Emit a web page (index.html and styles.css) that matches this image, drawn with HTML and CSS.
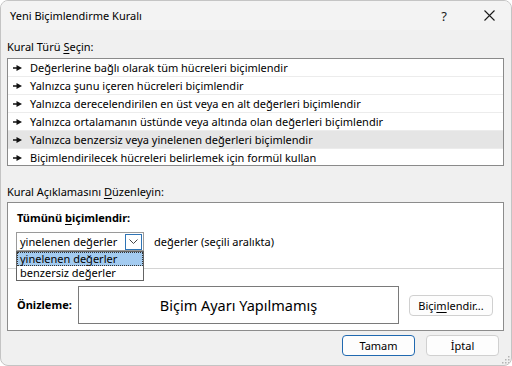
FILE: index.html
```html
<!DOCTYPE html>
<html lang="tr">

<head>
  <meta charset="UTF-8">
  <title>Yeni Biçimlendirme Kuralı</title>
  <link rel="stylesheet" href="styles.css">
</head>

<body>
  <div class="dialog">
    <div class="titlebar">
      <span class="title">Yeni Biçimlendirme Kuralı</span>
      <span class="help">?</span>
      <svg class="close" width="11" height="11" viewBox="0 0 11 11">
        <path d="M0.5 0.5 L10.5 10.5 M10.5 0.5 L0.5 10.5" stroke="#1a1a1a" stroke-width="1.1" fill="none" />
      </svg>
    </div>

    <div class="content">
      <div class="label label-first">Kural Türü <u>S</u>eçin:</div>
      <ul class="rule-list">
        <li><svg class="arrow" width="9" height="6" viewBox="0 0 9 6"><path d="M0 3h5" stroke="#111" stroke-width="1.3" /><path d="M3.5 0l5.5 3-5.5 3z" fill="#111" /></svg>Değerlerine bağlı olarak tüm hücreleri biçimlendir</li>
        <li><svg class="arrow" width="9" height="6" viewBox="0 0 9 6"><path d="M0 3h5" stroke="#111" stroke-width="1.3" /><path d="M3.5 0l5.5 3-5.5 3z" fill="#111" /></svg>Yalnızca şunu içeren hücreleri biçimlendir</li>
        <li><svg class="arrow" width="9" height="6" viewBox="0 0 9 6"><path d="M0 3h5" stroke="#111" stroke-width="1.3" /><path d="M3.5 0l5.5 3-5.5 3z" fill="#111" /></svg>Yalnızca derecelendirilen en üst veya en alt değerleri biçimlendir</li>
        <li><svg class="arrow" width="9" height="6" viewBox="0 0 9 6"><path d="M0 3h5" stroke="#111" stroke-width="1.3" /><path d="M3.5 0l5.5 3-5.5 3z" fill="#111" /></svg>Yalnızca ortalamanın üstünde veya altında olan değerleri biçimlendir</li>
        <li class="selected"><svg class="arrow" width="9" height="6" viewBox="0 0 9 6"><path d="M0 3h5" stroke="#111" stroke-width="1.3" /><path d="M3.5 0l5.5 3-5.5 3z" fill="#111" /></svg>Yalnızca benzersiz veya yinelenen değerleri biçimlendir</li>
        <li><svg class="arrow" width="9" height="6" viewBox="0 0 9 6"><path d="M0 3h5" stroke="#111" stroke-width="1.3" /><path d="M3.5 0l5.5 3-5.5 3z" fill="#111" /></svg>Biçimlendirilecek hücreleri belirlemek için formül kullan</li>
      </ul>

      <div class="label label-second">Kural Açıklamasını <u>D</u>üzenleyin:</div>
      <div class="panel">
        <div class="panel-top">
          <div class="bold">Tümünü <u>b</u>içimlendir:</div>
          <div class="combo-row">
            <div class="combo">
              <span class="combo-value">yinelenen değerler</span>
              <span class="combo-btn">
                <svg width="9" height="5" viewBox="0 0 9 5"><path d="M0.5 0.5 L4.5 4.5 L8.5 0.5" stroke="#444" stroke-width="1" fill="none" /></svg>
              </span>
              <ul class="combo-popup">
                <li class="active">yinelenen değerler</li>
                <li>benzersiz değerler</li>
              </ul>
            </div>
            <span class="combo-after">değerler (seçili aralıkta)</span>
          </div>
        </div>
        <div class="panel-bottom">
          <span class="bold preview-label">Önizleme:</span>
          <div class="preview">Biçim Ayarı Yapılmamış</div>
          <button class="btn format-btn">Biçi<u>m</u>lendir...</button>
        </div>
      </div>

      <div class="actions">
        <button class="btn btn-default">Tamam</button>
        <button class="btn">İptal</button>
      </div>
    </div>

    <svg class="grip" width="10" height="10" viewBox="0 0 10 10">
      <rect x="8" y="2" width="1.5" height="1.5" fill="#b4b4b4" />
      <rect x="5" y="5" width="1.5" height="1.5" fill="#b4b4b4" />
      <rect x="8" y="5" width="1.5" height="1.5" fill="#b4b4b4" />
      <rect x="2" y="8" width="1.5" height="1.5" fill="#b4b4b4" />
      <rect x="5" y="8" width="1.5" height="1.5" fill="#b4b4b4" />
      <rect x="8" y="8" width="1.5" height="1.5" fill="#b4b4b4" />
    </svg>
  </div>
</body>

</html>
```

FILE: styles.css
```css
* {
  box-sizing: border-box;
}

body {
  margin: 0;
  background: #ffffff;
  font-family: "Noto Sans", "Open Sans", sans-serif;
  font-size: 11px;
  color: #000;
}

.dialog {
  position: relative;
  width: 512px;
  height: 366px;
  background: #f0f0f0;
  border: 1px solid #c4c4c4;
  border-radius: 8px;
  overflow: hidden;
}

.titlebar {
  display: flex;
  align-items: center;
  height: 29px;
  padding-left: 9px;
  background: #f3f3f3;
}

.title {
  flex: 1;
  font-size: 11px;
}

.help {
  font-size: 13px;
  margin-right: 37px;
  color: #1a1a1a;
}

.close {
  margin-right: 16px;
}

.content {
  padding: 0 7px 0 6px;
}

.label {
  line-height: 16px;
}

.label-first {
  margin-top: 9px;
}

.label-second {
  margin-top: 18px;
}

u {
  text-decoration-thickness: 1px;
  text-underline-offset: 2px;
}

/* rule type list */
.rule-list {
  list-style: none;
  margin: 3px 0 0;
  padding: 0;
  height: 108px;
  overflow: hidden;
  background: #fff;
  border: 1px solid #8a8a8a;
}

.rule-list li {
  display: flex;
  align-items: center;
  height: 18px;
  padding-left: 5px;
  border-bottom: 1px solid #ececec;
  white-space: nowrap;
}

.rule-list li.selected {
  background: #e5e5e5;
}

.arrow {
  margin-right: 8px;
  flex-shrink: 0;
}

/* description panel */
.panel {
  margin-top: 2px;
  background: #fff;
  border: 1px solid #8c8c8c;
}

.panel-top {
  height: 66px;
  padding: 7px 0 0 9px;
  border-bottom: 1px solid #d4d4d4;
}

.bold {
  font-weight: 700;
  line-height: 16px;
}

.combo-row {
  display: flex;
  align-items: center;
  margin-top: 6px;
  margin-left: -1px;
}

.combo {
  position: relative;
  display: flex;
  align-items: center;
  width: 128px;
  height: 19px;
  border: 1px solid #9a9a9a;
  padding-left: 3px;
  white-space: nowrap;
}

.combo-value {
  flex: 1;
}

.combo-btn {
  display: flex;
  align-items: center;
  justify-content: center;
  width: 17px;
  height: 16px;
  margin-right: 1px;
  border: 1px solid #2f74b5;
  background: #fff;
}

.combo-popup {
  position: absolute;
  top: 18px;
  left: -1px;
  width: 128px;
  list-style: none;
  margin: 0;
  padding: 0;
  background: #fff;
  border: 1px solid #646464;
}

.combo-popup li {
  height: 14px;
  line-height: 13px;
  padding-left: 3px;
}

.combo-popup li.active {
  background: #a3cbf0;
  outline: 1px dotted #333;
  outline-offset: -1px;
}

.combo-after {
  margin-left: 10px;
}

.panel-bottom {
  display: flex;
  align-items: center;
  padding: 17px 0 6px 9px;
}

.preview-label {
  width: 61px;
}

.preview {
  display: flex;
  align-items: center;
  justify-content: center;
  width: 321px;
  height: 38px;
  border: 1px solid #7a7a7a;
  font-size: 14.5px;
}

.btn {
  font-family: inherit;
  font-size: 11px;
  color: #000;
  background: #fdfdfd;
  border: 1px solid #d0d0d0;
  border-radius: 4px;
  height: 21px;
  padding: 0;
}

.format-btn {
  width: 84px;
  margin-left: 10px;
}

.actions {
  display: flex;
  justify-content: flex-end;
  gap: 11px;
  margin-top: 4px;
  padding-right: 5px;
}

.actions .btn {
  width: 73px;
}

.btn-default {
  border: 1px solid #2069b0;
}

.grip {
  position: absolute;
  right: 1px;
  bottom: 1px;
}
```
